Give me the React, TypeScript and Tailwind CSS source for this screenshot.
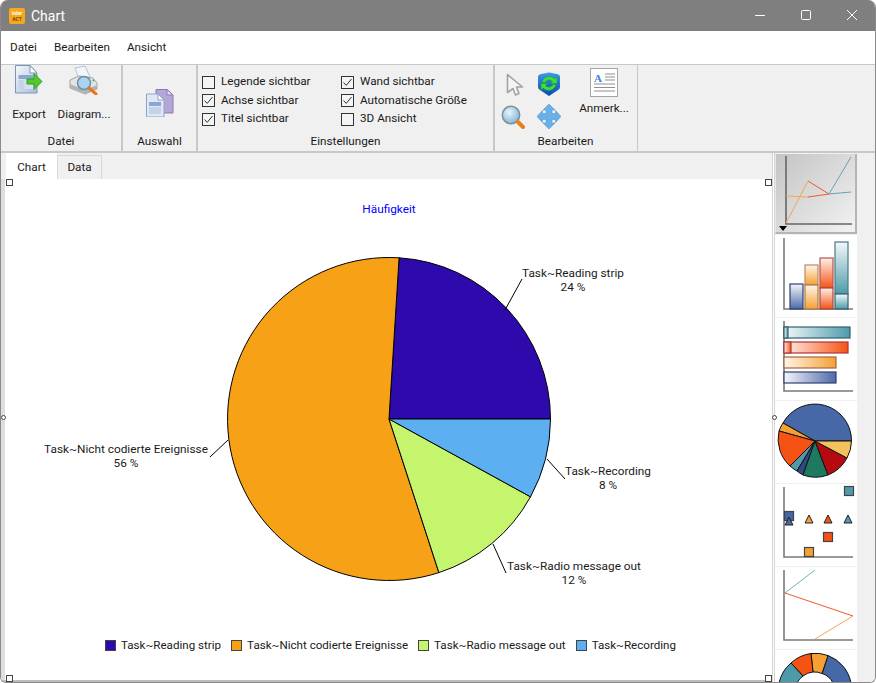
import React from "react";

function Check({ label, checked }: { label: string; checked?: boolean }) {
  return (
    <div className="flex h-[18.5px] items-center gap-[6px] whitespace-nowrap text-[11.7px] text-[#1a1a1a]">
      <span className="flex h-[13px] w-[13px] items-center justify-center border border-[#333] bg-[#f4f4f4]">
        {checked && (
          <svg width="11" height="11" viewBox="0 0 11 11">
            <path d="M1.5 5.5 L4.2 8.4 L9.5 2" fill="none" stroke="#333" strokeWidth="1" />
          </svg>
        )}
      </span>
      <span>{label}</span>
    </div>
  );
}

function DocShape({ id }: { id: string }) {
  return (
    <g>
      <defs>
        <linearGradient id={id} x1="0" y1="0" x2="1" y2="1">
          <stop offset="0" stopColor="#f6f9fd" />
          <stop offset="1" stopColor="#a9bcdc" />
        </linearGradient>
      </defs>
      <path d="M.5 .5 H15 L22 8 V28 H.5 Z" fill={`url(#${id})`} stroke="#7f93b8" />
      <path d="M15 .5 V8 H22 Z" fill="#fff" stroke="#7f93b8" />
      <rect x="3.5" y="10" width="15" height="4" fill="#8aa6d2" />
      <rect x="3.5" y="15" width="5" height="9" fill="#c4d2ea" />
      <rect x="9.5" y="15" width="9" height="9" fill="#d6e0f0" />
    </g>
  );
}

function ExportIcon() {
  return (
    <svg width="28" height="30" viewBox="0 0 28 30" className="block">
      <DocShape id="docA" />
      <path d="M12 14 H19 V8.5 L27 16.5 L19 24.5 V19 H12 Z" fill="#55c72f" stroke="#2f9c1c" />
    </svg>
  );
}

function PrinterIcon() {
  return (
    <svg width="30" height="30" viewBox="0 0 30 30" className="block">
      <path d="M6 3 L16 1 L21 12 L10 14 Z" fill="#f2f6fc" stroke="#b7c3d4" />
      <path d="M1 15 L10 11 L24 13 L28 18 V24 L16 29 L1 23 Z" fill="#e4e4e4" stroke="#a2a2a2" />
      <path d="M1 19 L16 25 L28 20 V24 L16 29 L1 23 Z" fill="#b4b4b4" />
      <circle cx="24.5" cy="15.5" r="1" fill="#45b545" />
      <circle cx="15" cy="18" r="6.5" fill="#a9d3ef" stroke="#6f8da6" strokeWidth="1.5" />
      <path d="M20 23 L27 29" stroke="#e8761d" strokeWidth="3" strokeLinecap="round" />
    </svg>
  );
}

function SelectIcon() {
  return (
    <svg width="28" height="28" viewBox="0 0 28 28" className="block">
      <path d="M10 .5 H21 L27 6 V24 H10 Z" fill="#b5a6d8" stroke="#8878b4" />
      <path d="M21 .5 V6 H27 Z" fill="#e4dcf4" stroke="#8878b4" />
      <path d="M.5 5 H12 L18 11 V28 H.5 Z" fill="#dfe8f5" stroke="#8fa3c4" />
      <path d="M12 5 V11 H18 Z" fill="#fff" stroke="#8fa3c4" />
      <rect x="3" y="13" width="12" height="4" fill="#8aa6d2" />
      <rect x="3" y="18" width="12" height="7" fill="#c4d2ea" />
    </svg>
  );
}

function PointerIcon() {
  return (
    <svg width="18" height="23" viewBox="0 0 18 23" className="ml-[5px] mt-[1px] block justify-self-start">
      <path d="M1.5 1.5 L16.5 14 H10.5 L13 20.5 L9.5 22 L7 15.5 L1.5 19.5 Z" fill="#f4f4f4" stroke="#a3a3a3" strokeWidth="1.6" strokeLinejoin="round" />
    </svg>
  );
}

function CubeIcon() {
  return (
    <svg width="24" height="24" viewBox="0 0 24 24" className="block">
      <defs>
        <linearGradient id="cubeFill" x1="0" y1="0" x2="0" y2="1">
          <stop offset="0" stopColor="#3f98ee" />
          <stop offset="1" stopColor="#0b4ab0" />
        </linearGradient>
      </defs>
      <path d="M1 5 Q1 2.5 4 2 L12 .5 L20 2 Q23 2.5 23 5 V15 Q23 17 21 18 L12 24 L3 18 Q1 17 1 15 Z" fill="url(#cubeFill)" />
      <path d="M5 10 C7 4 14 3 18 7 L20 4.5 V11.5 H13 L15.5 9.5 C13 7 9 7.5 8 11 Z" fill="#3be03f" stroke="#1a9a22" strokeWidth=".5" />
      <path d="M19 13 C17 19 10 20 6 16 L4 18.5 V11.5 H11 L8.5 13.5 C11 16 15 15.5 16 12 Z" fill="#3be03f" stroke="#1a9a22" strokeWidth=".5" />
    </svg>
  );
}

function LensIcon() {
  return (
    <svg width="24" height="24" viewBox="0 0 24 24" className="mt-[1px] block justify-self-start">
      <defs>
        <radialGradient id="lensFill" cx=".4" cy=".35" r=".7">
          <stop offset="0" stopColor="#e9f4fb" />
          <stop offset="1" stopColor="#7fb2d6" />
        </radialGradient>
      </defs>
      <circle cx="10" cy="10" r="8.7" fill="url(#lensFill)" stroke="#7d8f9c" strokeWidth="1.5" />
      <path d="M17 17 L22 22" stroke="#e8801d" strokeWidth="4" strokeLinecap="round" />
    </svg>
  );
}

function MoveIcon() {
  return (
    <svg width="24" height="25" viewBox="0 0 24 25" className="block">
      <path
        d="M12 0 L18 6 H15 V9.5 H18.5 V6.5 L24 12.5 L18.5 18.5 V15.5 H15 V19 H18 L12 25 L6 19 H9 V15.5 H5.5 V18.5 L0 12.5 L5.5 6.5 V9.5 H9 V6 H6 Z"
        fill="#6ab0e8"
        stroke="#5597cc"
        strokeWidth=".6"
      />
    </svg>
  );
}

function NoteIcon() {
  return (
    <svg width="28" height="29" viewBox="0 0 28 29" className="block">
      <rect x=".5" y=".5" width="27" height="28" fill="#fff" stroke="#a5a5a5" />
      <text x="4" y="14" fontSize="11" fontWeight="700" fill="#3f7fd0" fontFamily="Liberation Serif, serif">A</text>
      <path d="M15 6 H25 M15 9 H25 M15 12 H25 M4 16 H25 M4 19.5 H25 M4 23 H25" stroke="#8f8f8f" />
    </svg>
  );
}

function Axis({ color = "#7a7a7a", y = 73, x = 9 }: { color?: string; y?: number; x?: number }) {
  return <path d={`M${x} 3 V${y} H78`} fill="none" stroke={color} strokeWidth="1.6" />;
}

function Grad({ id, from, to, horizontal }: { id: string; from: string; to: string; horizontal?: boolean }) {
  return (
    <linearGradient id={id} x1="0" y1="0" x2={horizontal ? "1" : "0"} y2={horizontal ? "0" : "1"}>
      <stop offset="0" stopColor={from} />
      <stop offset="1" stopColor={to} />
    </linearGradient>
  );
}

function Thumb({ children, h = 82 }: { children: React.ReactNode; h?: number }) {
  return (
    <div className="w-[82px] shrink-0 overflow-hidden bg-white">
      <svg width="82" height={h} viewBox={`0 0 82 ${h}`} className="block">
        {children}
      </svg>
    </div>
  );
}

function Bar({ x, y, w, h, fill, stroke }: { x: number; y: number; w: number; h: number; fill: string; stroke: string }) {
  return <rect x={x} y={y} width={w} height={h} fill={`url(#${fill})`} stroke={stroke} strokeWidth="1.2" />;
}

const pieSlices = [
  { fill: "#4668a6", d: "M40 40 L76.5 40 A36.5 36.5 0 0 0 8 22 Z" },
  { fill: "#f5a033", d: "M40 40 L8 22 A36.5 36.5 0 0 0 4 30 Z" },
  { fill: "#f55314", d: "M40 40 L4 30 A36.5 36.5 0 0 0 15 65 Z" },
  { fill: "#4f9aaa", d: "M40 40 L15 65 A36.5 36.5 0 0 0 22 70 Z" },
  { fill: "#2f4a80", d: "M40 40 L22 70 A36.5 36.5 0 0 0 28 74 Z" },
  { fill: "#1d7a60", d: "M40 40 L28 74 A36.5 36.5 0 0 0 53 74 Z" },
  { fill: "#b40a10", d: "M40 40 L53 74 A36.5 36.5 0 0 0 72 57 Z" },
  { fill: "#f4c25c", d: "M40 40 L72 57 A36.5 36.5 0 0 0 76.5 40 Z" },
];

const legend = [
  { color: "#2e0aac", label: "Task~Reading strip" },
  { color: "#f7a117", label: "Task~Nicht codierte Ereignisse" },
  { color: "#c5f56d", label: "Task~Radio message out" },
  { color: "#5cb0f2", label: "Task~Recording" },
];

function Handle({ className, round }: { className: string; round?: boolean }) {
  return (
    <span
      className={`absolute border border-[#444] bg-white ${round ? "h-[5px] w-[5px] rounded-full" : "h-[7px] w-[7px]"} ${className}`}
    />
  );
}

function PieChart() {
  return (
    <svg width="765" height="501" viewBox="5 179 765 501" className="block" fontSize="11.8" fill="#1a1a1a">
      <text x="389" y="213" textAnchor="middle" fill="#0000ff">Häufigkeit</text>
      <g stroke="#000" strokeWidth="1">
        <path d="M389 419 L550.5 419 A161.5 161.5 0 0 0 399.1 257.8 Z" fill="#2e0aac" />
        <path d="M389 419 L399.1 257.8 A161.5 161.5 0 1 0 438.9 572.6 Z" fill="#f7a117" />
        <path d="M389 419 L438.9 572.6 A161.5 161.5 0 0 0 530.5 496.8 Z" fill="#c5f56d" />
        <path d="M389 419 L530.5 496.8 A161.5 161.5 0 0 0 550.5 419 Z" fill="#5cb0f2" />
        <path d="M505 310 L522 279 M210 457 L228 440 M493 544 L506 573 M547 459 L565 479" fill="none" />
      </g>
      <g textAnchor="middle">
        <text x="573" y="277">Task~Reading strip</text>
        <text x="573" y="291">24 %</text>
        <text x="126" y="453">Task~Nicht codierte Ereignisse</text>
        <text x="126" y="467">56 %</text>
        <text x="608" y="475">Task~Recording</text>
        <text x="608" y="489">8 %</text>
        <text x="574" y="570">Task~Radio message out</text>
        <text x="574" y="584">12 %</text>
      </g>
    </svg>
  );
}

export default function App() {
  return (
    <div className="relative flex h-[683px] w-[876px] flex-col overflow-hidden rounded-t-lg rounded-b-md border-x border-b border-[#8a8a8a] bg-[#f0f0f0] font-['Roboto','Noto_Sans',sans-serif] text-[11.7px] text-[#1a1a1a]">
      {/* title bar */}
      <div className="flex h-[31px] shrink-0 items-center bg-[#7f7f7f] pl-[8px] text-white">
        <div className="flex h-[16px] w-[16px] flex-col items-center justify-center rounded-[2px] bg-[#f5a81c] text-[5px] font-bold leading-[6px] text-[#7a4a00]">
          <span className="text-white">inter</span>
          <span>ACT</span>
        </div>
        <span className="ml-[6px] mt-[1px] text-[14px]">Chart</span>
        <div className="ml-auto flex items-center">
          <svg width="46" height="31" viewBox="0 0 46 31" className="block">
            <path d="M18 15.5 H28" stroke="#fff" />
          </svg>
          <svg width="46" height="31" viewBox="0 0 46 31" className="block">
            <rect x="18.5" y="10.5" width="9" height="9" rx="1" fill="none" stroke="#fff" />
          </svg>
          <svg width="46" height="31" viewBox="0 0 46 31" className="block">
            <path d="M18 10 L28 20 M28 10 L18 20" stroke="#fff" />
          </svg>
        </div>
      </div>

      {/* menu */}
      <div className="flex h-[34px] shrink-0 items-center border-b border-[#c8c8c8] bg-white pl-[9px]">
        <span className="w-[44px]">Datei</span>
        <span className="w-[73px]">Bearbeiten</span>
        <span>Ansicht</span>
      </div>

      {/* toolbar */}
      <div className="flex h-[88px] shrink-0 border-b-2 border-[#c8c8c8]">
        <div className="flex w-[122px] flex-col items-center border-r-2 border-[#c8c8c8]">
          <div className="flex h-[64px] w-full items-start">
            <div className="flex w-[56px] flex-col items-center">
              <ExportIcon />
              <span className="mt-[11px] text-[#1a1a1a]">Export</span>
            </div>
            <div className="flex w-[54px] flex-col items-center">
              <PrinterIcon />
              <span className="mt-[11px]">Diagram...</span>
            </div>
          </div>
          <span className="mt-[4px]">Datei</span>
        </div>
        <div className="flex w-[75px] flex-col items-center border-r-2 border-[#c8c8c8]">
          <div className="flex h-[64px] items-center pt-[11px]">
            <SelectIcon />
          </div>
          <span className="mt-[4px]">Auswahl</span>
        </div>
        <div className="flex w-[297px] flex-col border-r-2 border-[#c8c8c8]">
          <div className="flex h-[64px] items-start gap-[28px] pl-[4px] pt-[8px]">
            <div className="w-[111px]">
              <Check label="Legende sichtbar" />
              <Check label="Achse sichtbar" checked />
              <Check label="Titel sichtbar" checked />
            </div>
            <div>
              <Check label="Wand sichtbar" checked />
              <Check label="Automatische Größe" checked />
              <Check label="3D Ansicht" />
            </div>
          </div>
          <span className="mt-[4px] text-center">Einstellungen</span>
        </div>
        <div className="flex w-[143px] flex-col border-r border-[#c8c8c8]">
          <div className="flex h-[64px] items-start">
            <div className="grid grid-cols-[30px_24px] gap-x-[6px] gap-y-[8px] pl-[6px] pt-[7px]">
              <PointerIcon />
              <CubeIcon />
              <LensIcon />
              <MoveIcon />
            </div>
            <div className="ml-[13px] flex w-[60px] flex-col items-center pt-[3px]">
              <NoteIcon />
              <span className="mt-[3px]">Anmerk...</span>
            </div>
          </div>
          <span className="mt-[4px] pr-[1px] text-center">Bearbeiten</span>
        </div>
      </div>

      {/* body */}
      <div className="flex min-h-0 flex-1">
        <div className="flex w-[771px] shrink-0 flex-col">
          <div className="flex h-[26px] shrink-0 items-end pl-[5px]">
            <div className="flex h-[26px] w-[51px] items-center justify-center bg-white pt-[3px]">Chart</div>
            <div className="flex h-[24px] w-[45px] items-center justify-center border border-b-0 border-[#d9d9d9]">Data</div>
          </div>
          <div className="relative flex min-h-0 flex-1 flex-col border-l-4 border-[#dedede] bg-white">
            <PieChart />
            <div className="absolute left-[100px] top-[458px] flex items-center">
              {legend.map((item) => (
                <div key={item.label} className="flex items-center gap-[5px] text-[11.6px]">
                  <span className="h-[11px] w-[11px] border border-[#444]" style={{ backgroundColor: item.color }} />
                  <span>{item.label}</span>
                  <span className="w-[5px]" />
                </div>
              ))}
            </div>
          </div>
          <div className="h-[2px] shrink-0 bg-[#bdbdbd]" />
        </div>

        {/* splitter */}
        <div className="w-[3px] shrink-0 border-x border-[#d4d4d4] bg-white" />

        {/* thumbnails */}
        <div className="flex w-[82px] shrink-0 flex-col gap-[1px] overflow-hidden pt-[1px]">
          <div className="h-[80px] w-[82px] shrink-0 border-b-2 border-l border-r-2 border-[#b4b4b4] border-l-[#e8e8e8] bg-gradient-to-br from-[#c4c4c4] to-[#f2f2f2]">
            <svg width="79" height="78" viewBox="1 1 79 78" className="block">
              <path d="M11 3 V71 H77" fill="none" stroke="#666" strokeWidth="1.6" />
              <path d="M11 70 L33 28 M11 43 L33 44" fill="none" stroke="#f5a650" />
              <path d="M33 28 L54 41 M33 44 L54 41" fill="none" stroke="#ee5a28" />
              <path d="M54 41 L76 4 M54 41 L76 39" fill="none" stroke="#64a5b5" />
              <path d="M4 73 H12 L8 78 Z" fill="#000" />
            </svg>
          </div>
          <Thumb>
            <defs>
              <Grad id="tBlue" from="#f4f6fb" to="#4f6aa8" />
              <Grad id="tOrange" from="#fff6ea" to="#f5a033" />
              <Grad id="tRed" from="#fff0ea" to="#f55314" />
              <Grad id="tTeal" from="#f2f9fa" to="#4f9aaa" />
            </defs>
            <Axis y={74} />
            <Bar x={15} y={49} w={13} h={25} fill="tBlue" stroke="#2f3f70" />
            <Bar x={30} y={30} w={13} h={20} fill="tOrange" stroke="#b98a66" />
            <Bar x={30} y={50} w={13} h={24} fill="tOrange" stroke="#a87a3c" />
            <Bar x={45} y={23} w={13} h={30} fill="tRed" stroke="#b0584c" />
            <Bar x={45} y={53} w={13} h={21} fill="tRed" stroke="#a8463c" />
            <Bar x={60} y={7} w={13} h={52} fill="tTeal" stroke="#4f7682" />
            <Bar x={60} y={59} w={13} h={15} fill="tTeal" stroke="#35606c" />
          </Thumb>
          <Thumb>
            <defs>
              <Grad id="hBlue" from="#f4f6fb" to="#4f6aa8" horizontal />
              <Grad id="hOrange" from="#fff6ea" to="#f5a033" horizontal />
              <Grad id="hRed" from="#fff0ea" to="#f55314" horizontal />
              <Grad id="hTeal" from="#f2f9fa" to="#4f9aaa" horizontal />
            </defs>
            <Axis y={73} />
            <Bar x={9} y={9} w={66} h={11} fill="hTeal" stroke="#35606c" />
            <Bar x={9} y={9} w={4} h={11} fill="hTeal" stroke="#35606c" />
            <Bar x={9} y={24} w={64} h={11} fill="hRed" stroke="#a8383c" />
            <Bar x={9} y={24} w={7} h={11} fill="hRed" stroke="#a8383c" />
            <Bar x={9} y={39} w={52} h={11} fill="hOrange" stroke="#a8663c" />
            <Bar x={9} y={54} w={52} h={11} fill="hBlue" stroke="#2f3f70" />
          </Thumb>
          <Thumb>
            <g stroke="#111" strokeWidth="1">
              {pieSlices.map((s) => (
                <path key={s.fill} d={s.d} fill={s.fill} />
              ))}
            </g>
          </Thumb>
          <Thumb>
            <Axis y={73} />
            <g stroke="#444" strokeWidth="1.2">
              <rect x="69.5" y="2.5" width="9" height="9" fill="#4f9aaa" />
              <rect x="9.5" y="27.5" width="9" height="9" fill="#4668a6" />
              <rect x="48.5" y="48.5" width="9" height="9" fill="#f55314" />
              <rect x="29.5" y="63.5" width="9" height="9" fill="#f5a033" />
            </g>
            <g stroke="#222" strokeWidth="1">
              <path d="M14 33 L18 41 H10 Z" fill="#4668a6" />
              <path d="M34 31 L38 39 H30 Z" fill="#f5a033" />
              <path d="M53 31 L57 39 H49 Z" fill="#f55314" />
              <path d="M73 31 L77 39 H69 Z" fill="#4f9aaa" />
            </g>
          </Thumb>
          <Thumb>
            <Axis y={73} />
            <path d="M10 26 L40 3" fill="none" stroke="#72aebd" />
            <path d="M10 26 L78 49" fill="none" stroke="#ee5a28" />
            <path d="M78 49 L40 72" fill="none" stroke="#f5a650" />
          </Thumb>
          <Thumb h={32}>
            <g stroke="#111" strokeWidth="1">
              <path d="M53 5.5 A36.5 36.5 0 0 1 76 33 H58 A18 18 0 0 0 47 23.5 Z" fill="#4668a6" />
              <path d="M36 3.5 A36.5 36.5 0 0 1 53 5.5 L47 23.5 A18 18 0 0 0 38 22 Z" fill="#f5a033" />
              <path d="M16 13 A36.5 36.5 0 0 1 36 3.5 L38 22 A18 18 0 0 0 28 26 Z" fill="#f55314" />
              <path d="M4 33 A36.5 36.5 0 0 1 16 13 L28 26 A18 18 0 0 0 22 33 Z" fill="#4f9aaa" />
            </g>
          </Thumb>
        </div>

        {/* scrollbar gutter */}
        <div className="flex-1 bg-[#f0f0f0]" />

        <Handle className="left-[5px] top-[179px]" />
        <Handle className="left-[764px] top-[179px]" />
        <Handle round className="left-[0px] top-[415px]" />
        <Handle round className="left-[771px] top-[415px]" />
        <Handle className="left-[5px] top-[675px]" />
        <Handle className="left-[764px] top-[675px]" />
      </div>
    </div>
  );
}
